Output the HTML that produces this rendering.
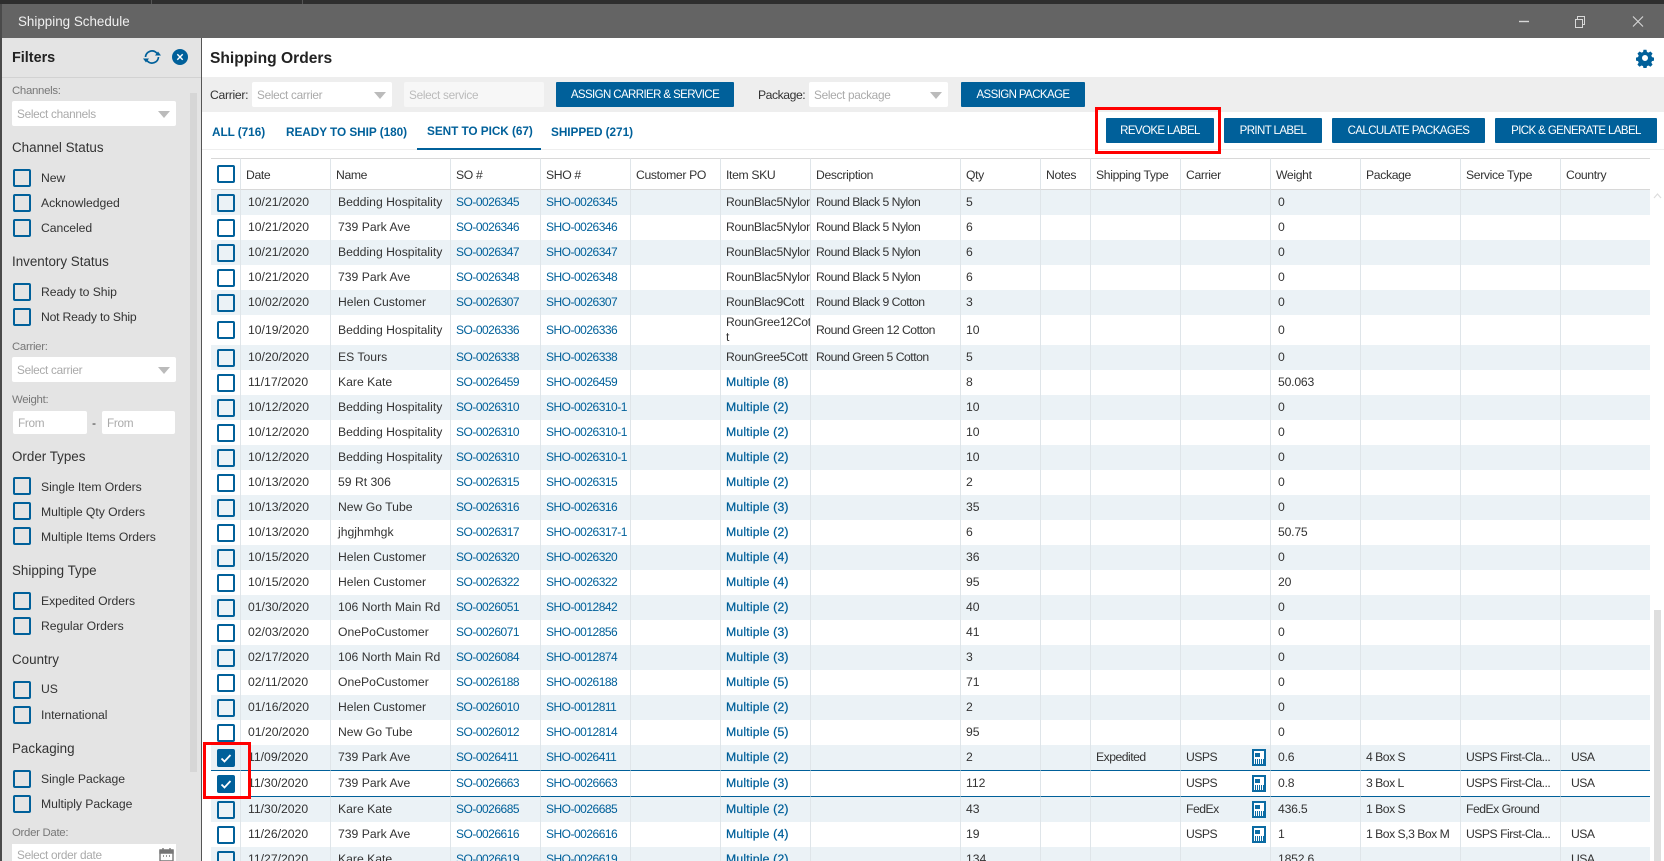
<!DOCTYPE html>
<html><head><meta charset="utf-8"><title>Shipping Schedule</title>
<style>
*{box-sizing:border-box}
html,body{margin:0;padding:0;width:1664px;height:861px;overflow:hidden;background:#fff}
body{position:relative;font-family:"Liberation Sans",sans-serif;font-size:12.2px;color:#333;letter-spacing:0}
.a{position:absolute;white-space:nowrap}
.t{position:absolute;white-space:nowrap;transform:translateY(calc(-50% + 1px));line-height:16px;letter-spacing:-.05px}
.cb{position:absolute;width:18px;height:18px;border:2px solid #00609a;border-radius:2px}
.h{font-size:13.4px;color:#333;letter-spacing:0}
.l{color:#777;font-size:11.4px;letter-spacing:-.3px}
.sel{position:absolute;background:#fff;border-radius:2px;color:#aaa;padding-left:5px;height:25px;line-height:26px;white-space:nowrap;font-size:11.8px;letter-spacing:-.3px}
.sel:after{content:"";position:absolute;right:6px;top:10px;border:6px solid transparent;border-top:7px solid #bbb;border-bottom:0;width:0;height:0}
.sel.nf:after{display:none}
.btn{position:absolute;background:#00609a;color:#fff;text-align:center;font-size:11.5px;line-height:26px;height:25px;letter-spacing:-.6px;border-radius:1px;white-space:nowrap}
.tab{position:absolute;top:124px;line-height:16px;font-weight:bold;color:#00609a;font-size:11.8px;letter-spacing:-.05px;white-space:nowrap}
table{position:absolute;left:211px;top:158px;width:1439px;border-collapse:separate;border-spacing:0;table-layout:fixed}
td,th{padding:0 0 0 5px;overflow:hidden;white-space:nowrap;border-right:1px solid #dfe5e9;font-weight:normal;text-align:left;height:25px;line-height:15px;position:relative}
th{height:32px;border-top:1px solid #d8d8d8;border-bottom:1px solid #d8d8d8;padding-top:3px;letter-spacing:-.35px}
th:last-child,td:last-child{border-right:0}
tbody tr:nth-child(odd){background:#ebf2f6}
tr.s td{border-bottom:1px solid #00609a;height:26px}
tr.w td{height:30px}
td i,th i{position:absolute;left:6px;top:50%;margin-top:-9px;width:18px;height:18px;border:2px solid #00609a;border-radius:2px;display:block}
td:nth-child(2),td:nth-child(3){padding-left:7px}
td:nth-child(7){letter-spacing:-.3px}
td:nth-child(8),td:nth-child(11),td:nth-child(12),td:nth-child(14),td:nth-child(15),td:nth-child(16){letter-spacing:-.5px}
td:nth-child(13){padding-left:7px;letter-spacing:-.2px}
td:nth-child(16){padding-left:10px}
td:nth-child(4),td:nth-child(5){color:#00609a;font-size:12px;letter-spacing:-.5px}
td b{font-weight:normal;color:#00609a;-webkit-text-stroke:.25px #00609a;letter-spacing:.2px}
td i.c{background:#00609a}
td i.c svg{position:absolute;left:1px;top:1px}
</style></head><body>
<!-- title bar -->
<div class="a" style="left:0;top:0;width:1664px;height:4px;background:#2e2e2e"></div>
<div class="a" style="left:151px;top:0;width:1px;height:4px;background:#555"></div>
<div class="a" style="left:302px;top:0;width:1px;height:4px;background:#555"></div>
<div class="a" style="left:0;top:4px;width:1664px;height:34px;background:#646464"></div>
<div class="a" style="left:0;top:4px;width:2px;height:857px;background:#4a4a4a"></div>
<div class="a" style="left:18px;top:13px;color:#f0f0f0;font-size:13.4px;line-height:18px;letter-spacing:0">Shipping Schedule</div>
<svg class="a" style="left:1515px;top:14px" width="135" height="15" fill="none" stroke="#d8d8d8" stroke-width="1"><path d="M4 7.500h10" stroke-width="1.4"/><path d="M60.500 5.500h7v8h-7zM62.500 5V2.500h7v8H68"/><path d="M118 2.500l10 10M128 2.500l-10 10" stroke-width="1.1"/></svg>
<!-- sidebar -->
<div class="a" style="left:2px;top:38px;width:199px;height:823px;background:#e4e4e4"></div>
<div class="a" style="left:201px;top:38px;width:1px;height:823px;background:#555"></div>
<div class="a" style="left:2px;top:77px;width:199px;height:1px;background:#d2d2d2"></div>
<div class="a" style="left:190px;top:93px;width:7px;height:679px;background:#d6d6d6"></div>
<div class="t" style="left:12px;top:57px;font-weight:bold;font-size:14.4px;color:#222;letter-spacing:0">Filters</div>
<svg class="a" style="left:142px;top:47px" width="20" height="20" viewBox="0 0 20 20" fill="none" stroke="#00609a" stroke-width="1.7"><path d="M3.500 10a6.500 6.500 0 0 1 11-4.200L16 7.500"/><path d="M16.500 10a6.500 6.500 0 0 1-11 4.200L4 12.500"/><path d="M13 8.500h6l-3-4zM7 11.500H1l3 4z" fill="#00609a" stroke="none"/></svg>
<svg class="a" style="left:172px;top:49px" width="16" height="16" viewBox="0 0 16 16"><circle cx="8" cy="8" r="8" fill="#00609a"/><path d="M5.300 5.300l5.400 5.400M10.700 5.300l-5.400 5.400" stroke="#fff" stroke-width="1.4"/></svg>
<div class="t l" style="left:12px;top:90px">Channels:</div>
<div class="sel" style="left:12px;top:101px;width:164px">Select channels</div>
<div class="t h" style="left:12px;top:147px">Channel Status</div>
<div class="cb" style="left:13px;top:169px"></div><div class="t" style="left:41px;top:177px">New</div>
<div class="cb" style="left:13px;top:194px"></div><div class="t" style="left:41px;top:202px">Acknowledged</div>
<div class="cb" style="left:13px;top:219px"></div><div class="t" style="left:41px;top:227px">Canceled</div>
<div class="t h" style="left:12px;top:261px">Inventory Status</div>
<div class="cb" style="left:13px;top:283px"></div><div class="t" style="left:41px;top:291px">Ready to Ship</div>
<div class="cb" style="left:13px;top:308px"></div><div class="t" style="left:41px;top:316px;letter-spacing:-.2px">Not Ready to Ship</div>
<div class="t l" style="left:12px;top:346px">Carrier:</div>
<div class="sel" style="left:12px;top:357px;width:164px">Select carrier</div>
<div class="t l" style="left:12px;top:399px">Weight:</div>
<div class="sel nf" style="left:13px;top:411px;width:74px;height:23px;line-height:24px;padding-left:5px">From</div>
<div class="t" style="left:92px;top:422px">-</div>
<div class="sel nf" style="left:102px;top:411px;width:73px;height:23px;line-height:24px;padding-left:5px">From</div>
<div class="t h" style="left:12px;top:456px">Order Types</div>
<div class="cb" style="left:13px;top:477px"></div><div class="t" style="left:41px;top:486px">Single Item Orders</div>
<div class="cb" style="left:13px;top:502px"></div><div class="t" style="left:41px;top:511px">Multiple Qty Orders</div>
<div class="cb" style="left:13px;top:527px"></div><div class="t" style="left:41px;top:536px">Multiple Items Orders</div>
<div class="t h" style="left:12px;top:570px">Shipping Type</div>
<div class="cb" style="left:13px;top:592px"></div><div class="t" style="left:41px;top:600px">Expedited Orders</div>
<div class="cb" style="left:13px;top:617px"></div><div class="t" style="left:41px;top:625px">Regular Orders</div>
<div class="t h" style="left:12px;top:659px">Country</div>
<div class="cb" style="left:13px;top:681px"></div><div class="t" style="left:41px;top:688px">US</div>
<div class="cb" style="left:13px;top:706px"></div><div class="t" style="left:41px;top:714px">International</div>
<div class="t h" style="left:12px;top:748px">Packaging</div>
<div class="cb" style="left:13px;top:770px"></div><div class="t" style="left:41px;top:778px">Single Package</div>
<div class="cb" style="left:13px;top:795px"></div><div class="t" style="left:41px;top:803px">Multiply Package</div>
<div class="t l" style="left:12px;top:832px">Order Date:</div>
<div class="a" style="left:12px;top:844px;width:164px;height:17px;background:#fff;color:#aaa;padding:4px 0 0 5px;font-size:11.8px;letter-spacing:-.3px">Select order date</div>
<svg class="a" style="left:159px;top:847px" width="15" height="14" fill="none" stroke="#777" stroke-width="1.4"><path d="M1 4h13v10H1zM4 1v3M11 1v3"/><path d="M1 3h13v3H1z" fill="#777"/><path d="M4 9h1M7 9h1M10 9h1" stroke-width="1.5"/></svg>
<!-- main header -->
<div class="t" style="left:210px;top:58px;font-weight:bold;font-size:15.6px;color:#222;letter-spacing:0">Shipping Orders</div>
<svg class="a" style="left:1636px;top:48px" width="18" height="20" viewBox="0 0 24 24"><path fill="#00609a" fill-rule="evenodd" d="M10 1h4l.6 3 2 .9 2.700-1.600 2.800 2.800-1.700 2.600.9 2.200 3 .6v4l-3 .6-.9 2.100 1.700 2.700-2.800 2.800-2.700-1.700-2 .9-.6 3h-4l-.6-3-2-.9-2.700 1.700-2.800-2.800 1.700-2.700-.9-2.100-3-.6v-4l3-.6.9-2.200-1.700-2.600 2.800-2.800L7.400 4.900l2-.9zM12 8a4 4 0 1 0 0 8 4 4 0 0 0 0-8z"/></svg>
<div class="a" style="left:202px;top:77px;width:1462px;height:35px;background:#eee"></div>
<div class="t" style="left:210px;top:94px;color:#333;letter-spacing:-.3px">Carrier:</div>
<div class="sel" style="left:252px;top:82px;width:140px">Select carrier</div>
<div class="a" style="left:404px;top:82px;width:140px;height:25px;background:#f7f7f7;color:#bbb;padding-left:5px;line-height:26px;border-radius:2px;font-size:11.8px;letter-spacing:-.3px">Select service</div>
<div class="btn" style="left:556px;top:82px;width:178px">ASSIGN CARRIER &amp; SERVICE</div>
<div class="t" style="left:758px;top:94px;color:#333;letter-spacing:-.45px">Package:</div>
<div class="sel" style="left:809px;top:82px;width:139px">Select package</div>
<div class="btn" style="left:961px;top:82px;width:124px">ASSIGN PACKAGE</div>
<!-- tabs -->
<div class="tab" style="left:212px">ALL (716)</div>
<div class="tab" style="left:286px">READY TO SHIP (180)</div>
<div class="tab" style="left:427px;top:123px">SENT TO PICK (67)</div>
<div class="tab" style="left:551px">SHIPPED (271)</div>
<div class="a" style="left:202px;top:149px;width:1462px;height:1px;background:#eee"></div>
<div class="a" style="left:417px;top:148px;width:124px;height:2px;background:#00609a"></div>
<div class="btn" style="left:1106px;top:118px;width:108px">REVOKE LABEL</div>
<div class="btn" style="left:1224px;top:118px;width:98px">PRINT LABEL</div>
<div class="btn" style="left:1332px;top:118px;width:153px">CALCULATE PACKAGES</div>
<div class="btn" style="left:1495px;top:118px;width:162px">PICK &amp; GENERATE LABEL</div>
<!-- table -->
<table>
<colgroup><col style="width:30px"><col style="width:90px"><col style="width:120px"><col style="width:90px"><col style="width:90px"><col style="width:90px"><col style="width:90px"><col style="width:150px"><col style="width:80px"><col style="width:50px"><col style="width:90px"><col style="width:90px"><col style="width:90px"><col style="width:100px"><col style="width:100px"><col style="width:89px"></colgroup>
<thead><tr><th><i></i></th><th>Date</th><th>Name</th><th>SO #</th><th>SHO #</th><th>Customer PO</th><th>Item SKU</th><th>Description</th><th>Qty</th><th>Notes</th><th>Shipping Type</th><th>Carrier</th><th>Weight</th><th>Package</th><th>Service Type</th><th>Country</th></tr></thead>
<tbody>
<tr><td><i></i></td><td>10/21/2020</td><td>Bedding Hospitality</td><td>SO-0026345</td><td>SHO-0026345</td><td></td><td>RounBlac5Nylon</td><td>Round Black 5 Nylon</td><td>5</td><td></td><td></td><td></td><td>0</td><td></td><td></td><td></td></tr>
<tr><td><i></i></td><td>10/21/2020</td><td>739 Park Ave</td><td>SO-0026346</td><td>SHO-0026346</td><td></td><td>RounBlac5Nylon</td><td>Round Black 5 Nylon</td><td>6</td><td></td><td></td><td></td><td>0</td><td></td><td></td><td></td></tr>
<tr><td><i></i></td><td>10/21/2020</td><td>Bedding Hospitality</td><td>SO-0026347</td><td>SHO-0026347</td><td></td><td>RounBlac5Nylon</td><td>Round Black 5 Nylon</td><td>6</td><td></td><td></td><td></td><td>0</td><td></td><td></td><td></td></tr>
<tr><td><i></i></td><td>10/21/2020</td><td>739 Park Ave</td><td>SO-0026348</td><td>SHO-0026348</td><td></td><td>RounBlac5Nylon</td><td>Round Black 5 Nylon</td><td>6</td><td></td><td></td><td></td><td>0</td><td></td><td></td><td></td></tr>
<tr><td><i></i></td><td>10/02/2020</td><td>Helen Customer</td><td>SO-0026307</td><td>SHO-0026307</td><td></td><td>RounBlac9Cott</td><td>Round Black 9 Cotton</td><td>3</td><td></td><td></td><td></td><td>0</td><td></td><td></td><td></td></tr>
<tr class="w"><td><i></i></td><td>10/19/2020</td><td>Bedding Hospitality</td><td>SO-0026336</td><td>SHO-0026336</td><td></td><td>RounGree12Cot<br>t</td><td>Round Green 12 Cotton</td><td>10</td><td></td><td></td><td></td><td>0</td><td></td><td></td><td></td></tr>
<tr><td><i></i></td><td>10/20/2020</td><td>ES Tours</td><td>SO-0026338</td><td>SHO-0026338</td><td></td><td>RounGree5Cott</td><td>Round Green 5 Cotton</td><td>5</td><td></td><td></td><td></td><td>0</td><td></td><td></td><td></td></tr>
<tr><td><i></i></td><td>11/17/2020</td><td>Kare Kate</td><td>SO-0026459</td><td>SHO-0026459</td><td></td><td><b>Multiple (8)</b></td><td></td><td>8</td><td></td><td></td><td></td><td>50.063</td><td></td><td></td><td></td></tr>
<tr><td><i></i></td><td>10/12/2020</td><td>Bedding Hospitality</td><td>SO-0026310</td><td>SHO-0026310-1</td><td></td><td><b>Multiple (2)</b></td><td></td><td>10</td><td></td><td></td><td></td><td>0</td><td></td><td></td><td></td></tr>
<tr><td><i></i></td><td>10/12/2020</td><td>Bedding Hospitality</td><td>SO-0026310</td><td>SHO-0026310-1</td><td></td><td><b>Multiple (2)</b></td><td></td><td>10</td><td></td><td></td><td></td><td>0</td><td></td><td></td><td></td></tr>
<tr><td><i></i></td><td>10/12/2020</td><td>Bedding Hospitality</td><td>SO-0026310</td><td>SHO-0026310-1</td><td></td><td><b>Multiple (2)</b></td><td></td><td>10</td><td></td><td></td><td></td><td>0</td><td></td><td></td><td></td></tr>
<tr><td><i></i></td><td>10/13/2020</td><td>59 Rt 306</td><td>SO-0026315</td><td>SHO-0026315</td><td></td><td><b>Multiple (2)</b></td><td></td><td>2</td><td></td><td></td><td></td><td>0</td><td></td><td></td><td></td></tr>
<tr><td><i></i></td><td>10/13/2020</td><td>New Go Tube</td><td>SO-0026316</td><td>SHO-0026316</td><td></td><td><b>Multiple (3)</b></td><td></td><td>35</td><td></td><td></td><td></td><td>0</td><td></td><td></td><td></td></tr>
<tr><td><i></i></td><td>10/13/2020</td><td>jhgjhmhgk</td><td>SO-0026317</td><td>SHO-0026317-1</td><td></td><td><b>Multiple (2)</b></td><td></td><td>6</td><td></td><td></td><td></td><td>50.75</td><td></td><td></td><td></td></tr>
<tr><td><i></i></td><td>10/15/2020</td><td>Helen Customer</td><td>SO-0026320</td><td>SHO-0026320</td><td></td><td><b>Multiple (4)</b></td><td></td><td>36</td><td></td><td></td><td></td><td>0</td><td></td><td></td><td></td></tr>
<tr><td><i></i></td><td>10/15/2020</td><td>Helen Customer</td><td>SO-0026322</td><td>SHO-0026322</td><td></td><td><b>Multiple (4)</b></td><td></td><td>95</td><td></td><td></td><td></td><td>20</td><td></td><td></td><td></td></tr>
<tr><td><i></i></td><td>01/30/2020</td><td>106 North Main Rd</td><td>SO-0026051</td><td>SHO-0012842</td><td></td><td><b>Multiple (2)</b></td><td></td><td>40</td><td></td><td></td><td></td><td>0</td><td></td><td></td><td></td></tr>
<tr><td><i></i></td><td>02/03/2020</td><td>OnePoCustomer</td><td>SO-0026071</td><td>SHO-0012856</td><td></td><td><b>Multiple (3)</b></td><td></td><td>41</td><td></td><td></td><td></td><td>0</td><td></td><td></td><td></td></tr>
<tr><td><i></i></td><td>02/17/2020</td><td>106 North Main Rd</td><td>SO-0026084</td><td>SHO-0012874</td><td></td><td><b>Multiple (3)</b></td><td></td><td>3</td><td></td><td></td><td></td><td>0</td><td></td><td></td><td></td></tr>
<tr><td><i></i></td><td>02/11/2020</td><td>OnePoCustomer</td><td>SO-0026188</td><td>SHO-0026188</td><td></td><td><b>Multiple (5)</b></td><td></td><td>71</td><td></td><td></td><td></td><td>0</td><td></td><td></td><td></td></tr>
<tr><td><i></i></td><td>01/16/2020</td><td>Helen Customer</td><td>SO-0026010</td><td>SHO-0012811</td><td></td><td><b>Multiple (2)</b></td><td></td><td>2</td><td></td><td></td><td></td><td>0</td><td></td><td></td><td></td></tr>
<tr><td><i></i></td><td>01/20/2020</td><td>New Go Tube</td><td>SO-0026012</td><td>SHO-0012814</td><td></td><td><b>Multiple (5)</b></td><td></td><td>95</td><td></td><td></td><td></td><td>0</td><td></td><td></td><td></td></tr>
<tr class="s"><td><i class="c"><svg width="12" height="12" viewBox="0 0 12 12" fill="none" stroke="#fff" stroke-width="1.8"><path d="M1.500 6.500l3 3 6-6.500"/></svg></i></td><td>11/09/2020</td><td>739 Park Ave</td><td>SO-0026411</td><td>SHO-0026411</td><td></td><td><b>Multiple (2)</b></td><td></td><td>2</td><td></td><td>Expedited</td><td>USPS</td><td>0.6</td><td>4 Box S</td><td>USPS First-Cla...</td><td>USA</td></tr>
<tr class="s"><td><i class="c"><svg width="12" height="12" viewBox="0 0 12 12" fill="none" stroke="#fff" stroke-width="1.8"><path d="M1.500 6.500l3 3 6-6.500"/></svg></i></td><td>11/30/2020</td><td>739 Park Ave</td><td>SO-0026663</td><td>SHO-0026663</td><td></td><td><b>Multiple (3)</b></td><td></td><td>112</td><td></td><td></td><td>USPS</td><td>0.8</td><td>3 Box L</td><td>USPS First-Cla...</td><td>USA</td></tr>
<tr><td><i></i></td><td>11/30/2020</td><td>Kare Kate</td><td>SO-0026685</td><td>SHO-0026685</td><td></td><td><b>Multiple (2)</b></td><td></td><td>43</td><td></td><td></td><td>FedEx</td><td>436.5</td><td>1 Box S</td><td>FedEx Ground</td><td></td></tr>
<tr><td><i></i></td><td>11/26/2020</td><td>739 Park Ave</td><td>SO-0026616</td><td>SHO-0026616</td><td></td><td><b>Multiple (4)</b></td><td></td><td>19</td><td></td><td></td><td>USPS</td><td>1</td><td>1 Box S,3 Box M</td><td>USPS First-Cla...</td><td>USA</td></tr>
<tr><td><i></i></td><td>11/27/2020</td><td>Kare Kate</td><td>SO-0026619</td><td>SHO-0026619</td><td></td><td><b>Multiple (2)</b></td><td></td><td>134</td><td></td><td></td><td></td><td>1852.6</td><td></td><td></td><td>USA</td></tr>
</tbody></table>
<!-- label icons -->
<svg class="a" style="left:1252px;top:749px" width="14" height="17" viewBox="0 0 14 17"><rect width="14" height="17" fill="#0b6ba3"/><rect x="2" y="2" width="10" height="13" fill="#fff"/><rect x="3" y="4" width="5" height="4" fill="#0b6ba3"/><path d="M3.500 10v5M5.500 10v5M7.500 10v5M9.500 10v5M11.500 10v5" stroke="#0b6ba3"/></svg>
<svg class="a" style="left:1252px;top:775px" width="14" height="17" viewBox="0 0 14 17"><rect width="14" height="17" fill="#0b6ba3"/><rect x="2" y="2" width="10" height="13" fill="#fff"/><rect x="3" y="4" width="5" height="4" fill="#0b6ba3"/><path d="M3.500 10v5M5.500 10v5M7.500 10v5M9.500 10v5M11.500 10v5" stroke="#0b6ba3"/></svg>
<svg class="a" style="left:1252px;top:801px" width="14" height="17" viewBox="0 0 14 17"><rect width="14" height="17" fill="#0b6ba3"/><rect x="2" y="2" width="10" height="13" fill="#fff"/><rect x="3" y="4" width="5" height="4" fill="#0b6ba3"/><path d="M3.500 10v5M5.500 10v5M7.500 10v5M9.500 10v5M11.500 10v5" stroke="#0b6ba3"/></svg>
<svg class="a" style="left:1252px;top:826px" width="14" height="17" viewBox="0 0 14 17"><rect width="14" height="17" fill="#0b6ba3"/><rect x="2" y="2" width="10" height="13" fill="#fff"/><rect x="3" y="4" width="5" height="4" fill="#0b6ba3"/><path d="M3.500 10v5M5.500 10v5M7.500 10v5M9.500 10v5M11.500 10v5" stroke="#0b6ba3"/></svg>
<!-- scrollbar -->
<svg class="a" style="left:1653px;top:193px" width="9" height="6" fill="none" stroke="#ddd" stroke-width="1.2"><path d="M1 5l3.500-4L8 5"/></svg>
<div class="a" style="left:1654px;top:610px;width:7px;height:251px;background:#dedede"></div>
<!-- red highlights -->
<div class="a" style="left:1095px;top:107px;width:126px;height:47px;border:3px solid #f00"></div>
<div class="a" style="left:203px;top:742px;width:48px;height:57px;border:3px solid #f00"></div>
</body></html>
